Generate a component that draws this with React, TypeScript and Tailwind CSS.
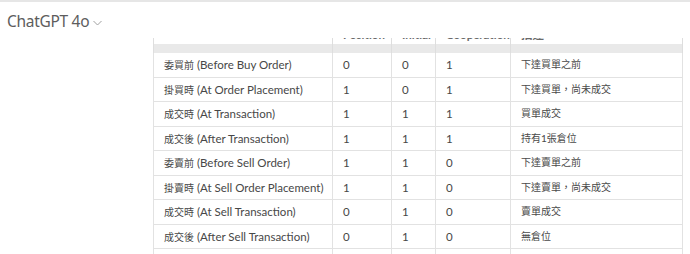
import React from "react";

const rows: [string, string, string, string, string][] = [
  ["委買前|(Before Buy Order)", "0", "0", "1", "下達買單之前"],
  ["掛買時|(At Order Placement)", "1", "0", "1", "下達買單，尚未成交"],
  ["成交時|(At Transaction)", "1", "1", "1", "買單成交"],
  ["成交後|(After Transaction)", "1", "1", "1", "持有1張倉位"],
  ["委賣前|(Before Sell Order)", "1", "1", "0", "下達賣單之前"],
  ["掛賣時|(At Sell Order Placement)", "1", "1", "0", "下達賣單，尚未成交"],
  ["成交時|(At Sell Transaction)", "0", "1", "0", "賣單成交"],
  ["成交後|(After Sell Transaction)", "0", "1", "0", "無倉位"],
];

const headers = ["", "Position", "Initial", "Cooperation", "描述"];
const cols = "grid grid-cols-[180px_59px_44px_75px_172px]";

export default function App() {
  return (
    <div
      className="w-[690px] h-[254px] overflow-hidden bg-white"
      style={{ fontFamily: '"Noto Sans", "Noto Sans CJK TC", sans-serif' }}
    >
      <div className="h-[2px] bg-[#e6e6e6]" />
      <div className="flex items-center h-[36px] pt-[3px] pl-[7px] gap-[4px] text-[#5d5d5d]">
        <span className="text-[15.5px] tracking-[-0.3px]">ChatGPT 4o</span>
        <svg width="9" height="6" viewBox="0 0 9 6" className="mt-[3px]">
          <path d="M0.5 1 L4.5 5 L8.5 1" fill="none" stroke="#a0a0a0" strokeWidth="1" />
        </svg>
      </div>
      <div
        className="ml-[153px] w-[530px] text-[11.5px] text-[#474747]"
        style={{ fontFamily: 'Lato, "Noto Sans CJK TC", sans-serif' }}
      >
        <div className={`${cols} h-[15px] overflow-hidden bg-[linear-gradient(to_bottom,#ffffff_0px,#ffffff_6px,#e9e9e9_6px,#e9e9e9_15px)]`}>
          {headers.map((h, i) => (
            <div
              key={i}
              className={`relative border-r border-[#dedede] ${i === 0 ? "border-l" : ""}`}
            >
              <span className="absolute left-[10px] top-[-11px] leading-[16px] font-bold text-[#6a6a6a] whitespace-nowrap">
                {h}
              </span>
            </div>
          ))}
        </div>
        {rows.map((r, ri) => (
          <div key={ri} className={`${cols} h-[24.5px]`}>
            {r.map((c, ci) => {
              let content: React.ReactNode = c;
              if (ci === 0) {
                const [cjk, lat] = c.split("|");
                content = (
                  <>
                    <span className="text-[10px]" style={{ fontFamily: '"Noto Sans CJK TC", sans-serif' }}>{cjk}</span>
                    <span>&nbsp;{lat}</span>
                  </>
                );
              }
              return (
                <div
                  key={ci}
                  className={`flex items-center pl-[10px] whitespace-nowrap border-b border-r border-[#e2e2e2] ${ci === 0 ? "border-l" : ""} ${ci === 4 ? "text-[10px] text-[#4a4a4a]" : ""}`}
                >
                  {content}
                </div>
              );
            })}
          </div>
        ))}
        <div className={`${cols} h-[24px]`}>
          {[0, 1, 2, 3, 4].map((i) => (
            <div key={i} className={`border-r border-[#e2e2e2] ${i === 0 ? "border-l" : ""}`} />
          ))}
        </div>
      </div>
    </div>
  );
}
